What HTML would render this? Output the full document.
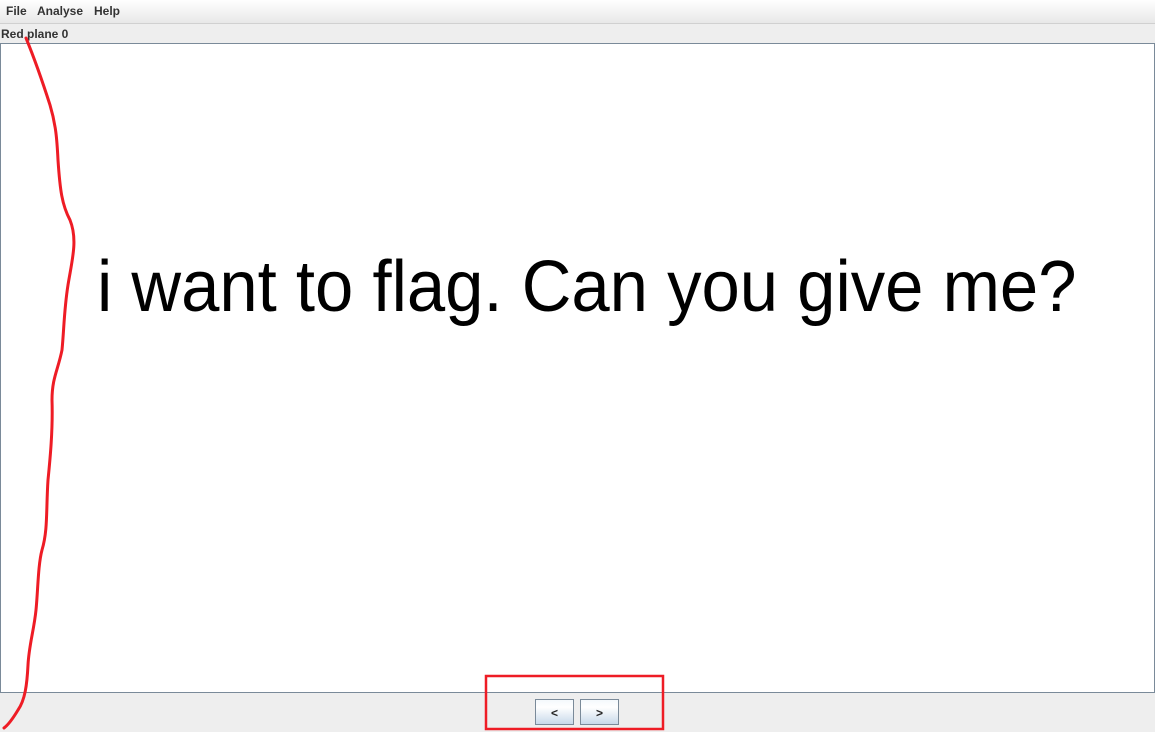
<!DOCTYPE html>
<html><head><meta charset="utf-8"><style>
html,body{margin:0;padding:0;width:1155px;height:732px;overflow:hidden;background:#eeeeee;font-family:"Liberation Sans",sans-serif;position:relative}
.menu{position:absolute;left:0;top:0;width:1155px;height:23px;background:linear-gradient(#ffffff,#e8e8e8);border-bottom:1px solid #d0d0d0;font-size:12px;font-weight:bold;color:#333}
.menu span{position:absolute;top:4px}
.lbl{position:absolute;left:1px;top:27px;font-size:12px;font-weight:bold;color:#333}
.panel{position:absolute;left:0;top:43px;width:1153px;height:648px;background:#fff;border:1px solid #7a8a99}
.txt{position:absolute;left:97px;top:246px;font-size:72px;white-space:nowrap;color:#000;transform-origin:0 0;transform:scaleX(0.956)}
.btn{position:absolute;top:699px;width:39px;height:26px;border:1px solid #7a8a99;background:linear-gradient(#f4f8fc,#fff 30%,#c8d9ea);font-size:12px;font-weight:bold;text-align:center;line-height:26px;color:#222;box-sizing:border-box}
</style></head><body>
<div class="menu"><span style="left:6px">File</span><span style="left:37px">Analyse</span><span style="left:94px">Help</span></div>
<div class="lbl">Red plane 0</div>
<div class="panel"></div>
<div class="txt">i want to flag. Can you give me?</div>
<div class="btn" style="left:535px">&lt;</div>
<div class="btn" style="left:580px">&gt;</div>
<svg style="position:absolute;left:0;top:0" width="1155" height="732">
<path d="M26,38 C35,60 42,80 50,105 C56,125 57,140 58,160 C60,190 62,205 70,220 C78,240 72,260 68,285 C64,310 64,330 62,350 C58,370 52,378 52,400 C53,430 50,460 48,480 C46,510 48,530 42,550 C38,565 38,590 36,610 C34,630 29,645 28,665 C27,685 25,700 18,710 C12,720 8,725 4,728" fill="none" stroke="#ee1c25" stroke-width="3" stroke-linecap="round"/>
<rect x="486" y="676" width="177" height="53" fill="none" stroke="#ee1c25" stroke-width="2.5"/>
</svg>
</body></html>
